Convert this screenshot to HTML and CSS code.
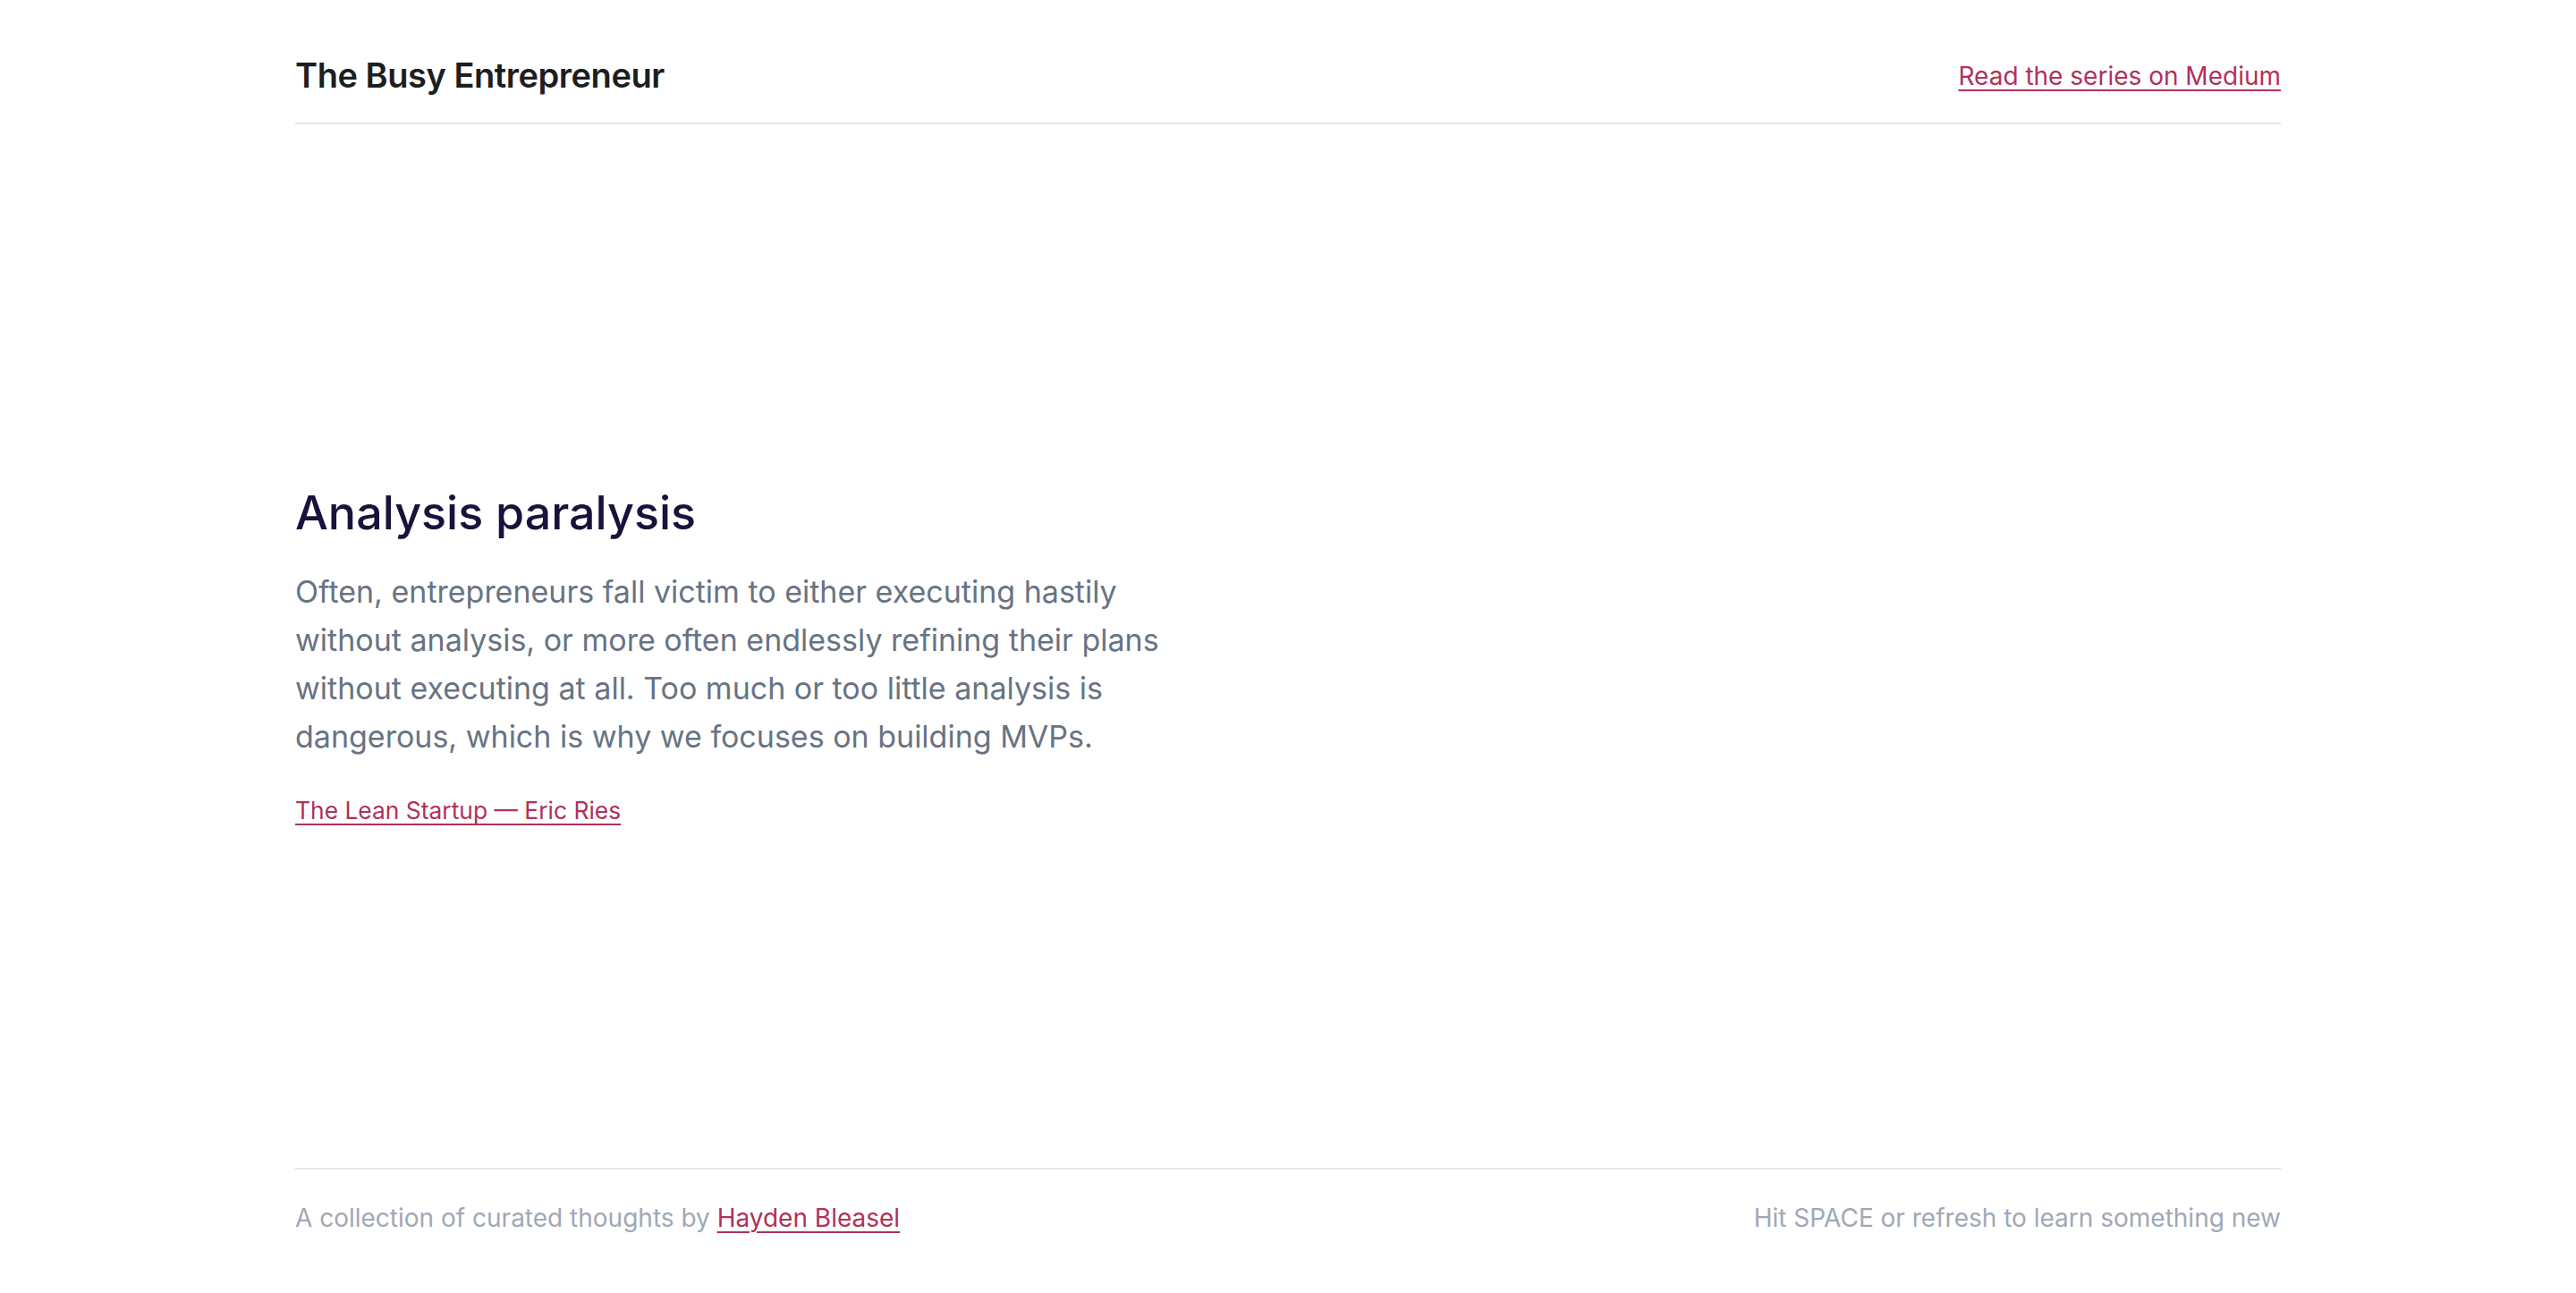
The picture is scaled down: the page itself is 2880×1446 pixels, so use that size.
FILE: index.html
```html
<!DOCTYPE html>
<html lang="en">
<head>
<meta charset="utf-8">
<title>The Busy Entrepreneur</title>
<link rel="stylesheet" href="styles.css">
</head>
<body>
<div class="page">
  <header class="header">
    <div class="brand">The Busy Entrepreneur</div>
    <a class="link header-link" href="#">Read the series on Medium</a>
  </header>
  <main class="main">
    <article class="thought">
      <h1 class="title">Analysis paralysis</h1>
      <p class="body">Often, entrepreneurs fall victim to either executing hastily without analysis, or more often endlessly refining their plans without executing at all. Too much or too little analysis is dangerous, which is why we focuses on building MVPs.</p>
      <a class="link source" href="#">The Lean Startup — Eric Ries</a>
    </article>
  </main>
  <footer class="footer">
    <p class="footer-text">A collection of curated thoughts by <a class="link" href="#">Hayden Bleasel</a></p>
    <p class="footer-text">Hit SPACE or refresh to learn something new</p>
  </footer>
</div>
</body>
</html>
```

FILE: styles.css
```css
* { box-sizing: border-box; }
html, body { margin: 0; padding: 0; background: #ffffff; }
body {
  font-family: Inter, "Noto Sans", "Liberation Sans", sans-serif;
  -webkit-font-smoothing: antialiased;
}
.page {
  width: 2220px;
  margin: 0 auto;
  height: 1446px;
  display: flex;
  flex-direction: column;
}
.header {
  display: flex;
  justify-content: space-between;
  align-items: center;
  padding: 62px 0 30px;
  border-bottom: 2px solid #e5e7eb;
}
.brand {
  font-size: 38px;
  line-height: 45px;
  font-weight: 600;
  letter-spacing: -0.012em;
  color: #1d1e21;
}
.link {
  color: #b13159;
  text-decoration: underline;
  text-decoration-thickness: 2px;
  text-underline-offset: 5px;
}
.header-link {
  font-size: 28px;
  line-height: 40px;
}
.main {
  flex: 1;
  display: flex;
  align-items: center;
  padding-top: 22px;
}
.thought {
  max-width: 1000px;
}
.title {
  margin: 0;
  font-size: 52px;
  line-height: 64px;
  font-weight: 500;
  color: #17133b;
}
.body {
  margin: 29px 0 0;
  font-size: 34px;
  line-height: 54px;
  color: #687383;
}
.source {
  display: inline-block;
  margin-top: 36px;
  font-size: 26.4px;
  line-height: 38px;
}
.footer {
  display: flex;
  justify-content: space-between;
  align-items: center;
  border-top: 2px solid #e5e7eb;
  padding: 33px 0 63px;
}
.footer-text {
  margin: 0;
  font-size: 28px;
  line-height: 42px;
  color: #a0a8b6;
}
```
